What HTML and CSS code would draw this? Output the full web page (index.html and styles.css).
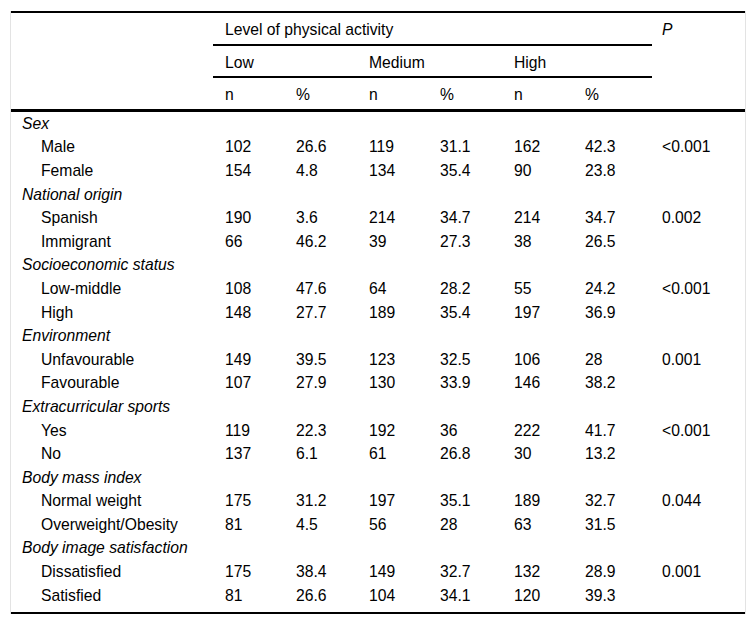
FILE: index.html
```html
<!DOCTYPE html>
<html lang="en">
<head>
<meta charset="utf-8">
<title>Level of physical activity</title>
<link rel="stylesheet" href="styles.css">
</head>
<body>
<div class="frame">
<table class="data">
<colgroup>
<col class="c-label"><col class="c-n"><col class="c-p1"><col class="c-n"><col class="c-p2"><col class="c-n"><col class="c-p3"><col class="c-pv">
</colgroup>
<thead>
<tr class="h1">
<th rowspan="3" class="blank"></th>
<th colspan="6" class="grp">Level of physical activity</th>
<th rowspan="3" class="pv"><i>P</i></th>
</tr>
<tr class="h2">
<th colspan="2" class="grp">Low</th>
<th colspan="2" class="grp">Medium</th>
<th colspan="2" class="grp">High</th>
</tr>
<tr class="h3">
<th>n</th><th>%</th><th>n</th><th>%</th><th>n</th><th>%</th>
</tr>
</thead>
<tbody>
<tr class="cat"><td colspan="8">Sex</td></tr>
<tr><td class="sub">Male</td><td>102</td><td>26.6</td><td>119</td><td>31.1</td><td>162</td><td>42.3</td><td class="pv">&lt;0.001</td></tr>
<tr><td class="sub">Female</td><td>154</td><td>4.8</td><td>134</td><td>35.4</td><td>90</td><td>23.8</td><td class="pv"></td></tr>
<tr class="cat"><td colspan="8">National origin</td></tr>
<tr><td class="sub">Spanish</td><td>190</td><td>3.6</td><td>214</td><td>34.7</td><td>214</td><td>34.7</td><td class="pv">0.002</td></tr>
<tr><td class="sub">Immigrant</td><td>66</td><td>46.2</td><td>39</td><td>27.3</td><td>38</td><td>26.5</td><td class="pv"></td></tr>
<tr class="cat"><td colspan="8">Socioeconomic status</td></tr>
<tr><td class="sub">Low-middle</td><td>108</td><td>47.6</td><td>64</td><td>28.2</td><td>55</td><td>24.2</td><td class="pv">&lt;0.001</td></tr>
<tr><td class="sub">High</td><td>148</td><td>27.7</td><td>189</td><td>35.4</td><td>197</td><td>36.9</td><td class="pv"></td></tr>
<tr class="cat"><td colspan="8">Environment</td></tr>
<tr><td class="sub">Unfavourable</td><td>149</td><td>39.5</td><td>123</td><td>32.5</td><td>106</td><td>28</td><td class="pv">0.001</td></tr>
<tr><td class="sub">Favourable</td><td>107</td><td>27.9</td><td>130</td><td>33.9</td><td>146</td><td>38.2</td><td class="pv"></td></tr>
<tr class="cat"><td colspan="8">Extracurricular sports</td></tr>
<tr><td class="sub">Yes</td><td>119</td><td>22.3</td><td>192</td><td>36</td><td>222</td><td>41.7</td><td class="pv">&lt;0.001</td></tr>
<tr><td class="sub">No</td><td>137</td><td>6.1</td><td>61</td><td>26.8</td><td>30</td><td>13.2</td><td class="pv"></td></tr>
<tr class="cat"><td colspan="8">Body mass index</td></tr>
<tr><td class="sub">Normal weight</td><td>175</td><td>31.2</td><td>197</td><td>35.1</td><td>189</td><td>32.7</td><td class="pv">0.044</td></tr>
<tr><td class="sub">Overweight/Obesity</td><td>81</td><td>4.5</td><td>56</td><td>28</td><td>63</td><td>31.5</td><td class="pv"></td></tr>
<tr class="cat"><td colspan="8">Body image satisfaction</td></tr>
<tr><td class="sub">Dissatisfied</td><td>175</td><td>38.4</td><td>149</td><td>32.7</td><td>132</td><td>28.9</td><td class="pv">0.001</td></tr>
<tr class="last"><td class="sub">Satisfied</td><td>81</td><td>26.6</td><td>104</td><td>34.1</td><td>120</td><td>39.3</td><td class="pv"></td></tr>
</tbody>
</table>
</div>
</body>
</html>
```
FILE: styles.css
```css
html, body {
  margin: 0;
  padding: 0;
  background: #ffffff;
}

body {
  font-family: "Liberation Sans", Arial, sans-serif;
  font-size: 15.7px;
  color: #000;
}

.frame {
  margin: 11px 0 0 10px;
  width: 736px;
  box-sizing: border-box;
  border-left: 1px solid #e3e3e3;
  border-right: 1px solid #e3e3e3;
}

.data {
  width: 734px;
  table-layout: fixed;
  border-collapse: collapse;
  border-spacing: 0;
  border-bottom: 2px solid #000;
}

.c-label { width: 202px; }
.c-n { width: 71px; }
.c-p1 { width: 73px; }
.c-p2 { width: 74px; }
.c-p3 { width: 79px; }
.c-pv { width: 93px; }

.data th {
  font-weight: normal;
  text-align: left;
  vertical-align: top;
  line-height: 19.6px;
  padding: 7px 12px 4px;
}

.data thead .h1 th {
  border-top: 2px solid #000;
}

.data thead .blank,
.data thead .pv {
  border-bottom: 3px solid #000;
}

.data thead .pv {
  padding-left: 10px;
}

.data thead .grp {
  border-bottom: 2px solid #000;
}

.data thead .h3 th {
  border-bottom: 3px solid #000;
}

.data td {
  line-height: 19.6px;
  padding: 2px 12px;
  text-align: left;
  white-space: nowrap;
}

.data .cat td {
  font-style: italic;
  padding-left: 11px;
}

.data td.sub {
  padding-left: 30px;
}

.data td.pv {
  padding-left: 10px;
}

.data .last td {
  padding-bottom: 7px;
}
```
